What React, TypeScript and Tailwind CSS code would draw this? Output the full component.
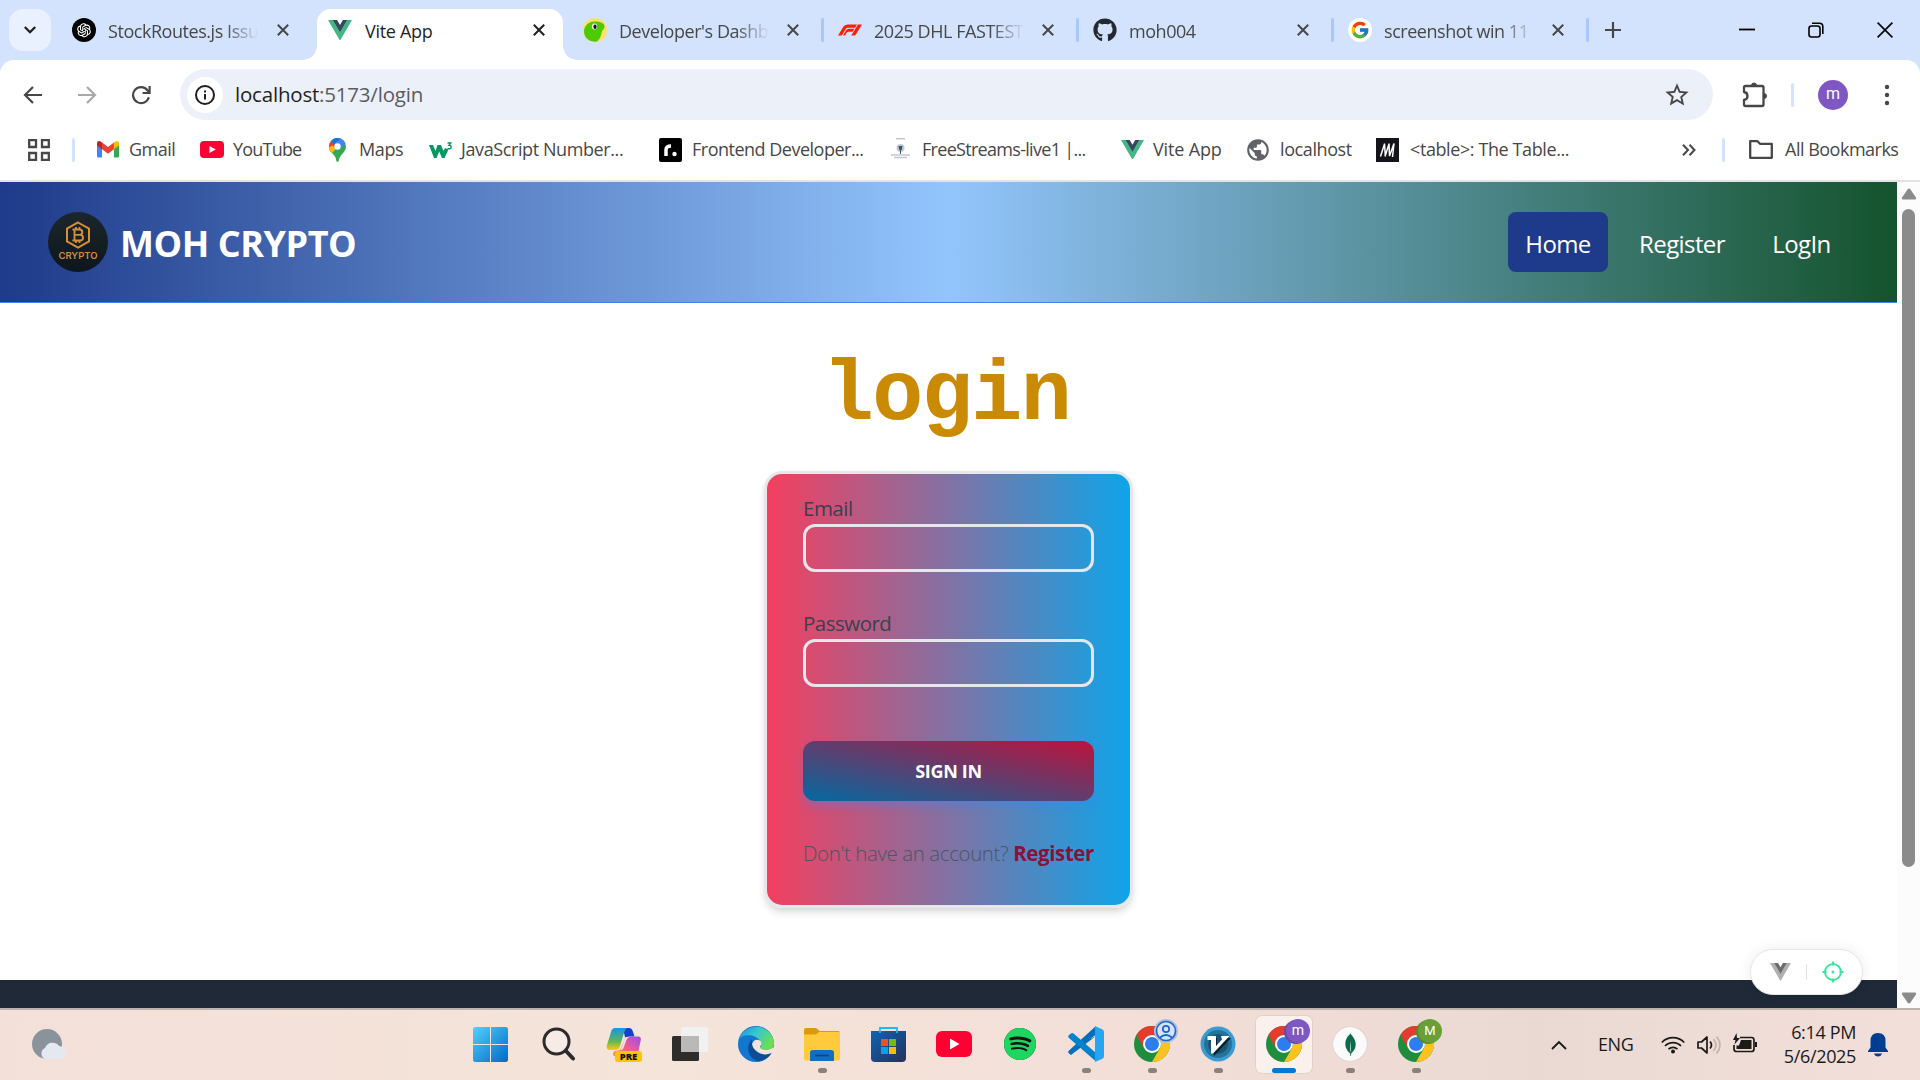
import type { ReactNode } from "react";
import { MdStarBorder, MdPublic } from "react-icons/md";
import { FaGithub, FaSpotify } from "react-icons/fa";
import { FcGoogle } from "react-icons/fc";
import { SiMongodb } from "react-icons/si";
import { AiOutlineOpenAI } from "react-icons/ai";

const ui = "font-['Open_Sans','Noto_Sans',sans-serif]";

function CloseX({ className = "text-[#474747]" }: { className?: string }) {
  return (
    <svg viewBox="0 0 12 12" className={`h-3 w-3 shrink-0 ${className}`} fill="none" stroke="currentColor" strokeWidth="2">
      <path d="M.8.8l10.4 10.4M11.2.8L.8 11.2" />
    </svg>
  );
}

function VueLogo({ outer = "#41b883", inner = "#34495e", className = "w-6" }: { outer?: string; inner?: string; className?: string }) {
  return (
    <svg viewBox="0 0 256 221" className={`shrink-0 ${className}`}>
      <path d="M0 0h51l77 132L204 0h52L128 221z" fill={outer} />
      <path d="M50 0l78 133L205 0h-47l-30 52L97 0z" fill={inner} />
    </svg>
  );
}

function GeckoIcon() {
  return (
    <svg viewBox="0 0 24 24" className="h-6 w-6">
      <circle cx="12" cy="12" r="12" fill="#ffe066" />
      <path d="M1 14C1 8 5 4 11 3.5c5-.5 10 1 10.500 4.500.4 3-2.500 4-3 7C18 19 16 22 13.500 23.800 6 24 1.500 20 1 14z" fill="#4bcb00" />
      <ellipse cx="11.500" cy="8.500" rx="2.600" ry="3" fill="#fff" />
      <ellipse cx="12" cy="8.800" rx="1.600" ry="2.200" fill="#111" />
    </svg>
  );
}

function F1Icon() {
  return (
    <svg viewBox="0 0 24 24" className="h-6 w-6" fill="#ff1e00">
      <path d="M0 17.500L5.200 9Q6.600 6.500 9.500 6.500H19l-2 3.200H10q-1.500 0-2.300 1.300L3.800 17.500z" />
      <path d="M5 17.500l3.200-5.200q.9-1.500 2.700-1.500h5.500l-1.800 3h-4.300q-1 0-1.500.8l-1.700 2.900z" />
      <path d="M20 6.500h4l-6.800 11h-4z" />
    </svg>
  );
}

const tabs: { title: string; icon: ReactNode }[] = [
  { title: "Developer's Dashb", icon: <GeckoIcon /> },
  { title: "2025 DHL FASTEST", icon: <F1Icon /> },
  { title: "moh004", icon: <FaGithub className="h-6 w-6 text-[#24292f]" /> },
  {
    title: "screenshot win 11",
    icon: (
      <span className="flex h-6 w-6 items-center justify-center rounded-full bg-white">
        <FcGoogle className="h-5 w-5" />
      </span>
    ),
  },
];

function TabTitle({ children }: { children: ReactNode }) {
  return (
    <span className="block w-[150px] whitespace-nowrap text-[18px] leading-6 tracking-[-0.45px] text-[#474747] [mask-image:linear-gradient(to_right,black_78%,transparent)]">
      {children}
    </span>
  );
}

function TabStrip() {
  return (
    <div className="flex h-[60px] bg-[#d3e3fd]">
      <div className="ml-[9px] mt-[9px] flex h-[42px] w-[42px] shrink-0 items-center justify-center rounded-[14px] bg-[#e9f1fe]">
        <svg viewBox="0 0 12 8" className="h-2 w-3" fill="none" stroke="#1f1f1f" strokeWidth="2.300">
          <path d="M.8 1L6 6.200 11.200 1" />
        </svg>
      </div>
      <div className="ml-[21px] flex w-[231px] shrink-0 items-center">
        <span className="flex h-6 w-6 items-center justify-center rounded-full bg-black text-white">
          <AiOutlineOpenAI className="h-[18px] w-[18px]" />
        </span>
        <span className="ml-3 w-[169px] pt-0.5">
          <TabTitle>StockRoutes.js Issu</TabTitle>
        </span>
        <CloseX />
      </div>
      <div className="flex shrink-0 items-end">
        <div className="h-[14px] w-[14px] bg-[radial-gradient(circle_at_0_0,#d3e3fd_13.500px,#fff_14px)]" />
        <div className="flex h-[51px] w-[246px] items-center rounded-t-[14px] bg-white pb-[9px]">
          <VueLogo className="ml-[11px] w-6" />
          <span className="ml-[13px] w-[168px] pt-0.5 text-[18px] tracking-[-0.3px] text-[#1f1f1f]">Vite App</span>
          <CloseX className="text-[#1f1f1f]" />
        </div>
        <div className="h-[14px] w-[14px] bg-[radial-gradient(circle_at_100%_0,#d3e3fd_13.500px,#fff_14px)]" />
      </div>
      <div className="-ml-[7px] flex items-center">
        {tabs.map((t) => (
          <div key={t.title} className="flex h-full w-[255px] shrink-0 items-center">
            <span className="ml-[13px] w-6 shrink-0">{t.icon}</span>
            <span className="ml-3 w-[168px] shrink-0 pt-0.5">
              <TabTitle>{t.title}</TabTitle>
            </span>
            <CloseX />
            <span className="ml-[22px] h-6 w-[3px] rounded-full bg-[#a8c7fa]" />
          </div>
        ))}
      </div>
      <svg viewBox="0 0 16 16" className="ml-[15px] mt-[22px] h-4 w-4 shrink-0" stroke="#474747" strokeWidth="2.200">
        <path d="M8 0v16M0 8h16" />
      </svg>
      <div className="ml-auto mr-[27px] flex items-center gap-[53px] text-black">
        <svg viewBox="0 0 16 16" className="h-4 w-4" stroke="currentColor" strokeWidth="1.800">
          <path d="M0 7.500h16" />
        </svg>
        <svg viewBox="0 0 16 16" className="h-4 w-4" fill="none" stroke="currentColor" strokeWidth="1.600">
          <rect x="1" y="4" width="11" height="11" rx="2.500" />
          <path d="M4 1.200h7.500q3.300 0 3.300 3.300V12" />
        </svg>
        <svg viewBox="0 0 16 16" className="h-4 w-4" fill="none" stroke="currentColor" strokeWidth="1.600">
          <path d="M.6.6l14.800 14.800M15.400.6L.6 15.400" />
        </svg>
      </div>
    </div>
  );
}

function Toolbar() {
  return (
    <div className="bg-[#d3e3fd]">
      <div className="flex h-[68px] items-center rounded-t-[14px] bg-white pt-px text-[#474747]">
        <svg viewBox="0 0 20 20" className="ml-[23px] h-5 w-5" fill="none" stroke="currentColor" strokeWidth="2.200">
          <path d="M19 10H2.500M10 2l-8 8 8 8" />
        </svg>
        <svg viewBox="0 0 20 20" className="ml-[34px] h-5 w-5 text-[#a9a9a9]" fill="none" stroke="currentColor" strokeWidth="2.200">
          <path d="M1 10h16.500M10 2l8 8-8 8" />
        </svg>
        <svg viewBox="0 0 20 20" className="ml-[34px] h-5 w-5" fill="none" stroke="currentColor" strokeWidth="2.200">
          <path d="M17.800 12.200A8 8 0 1 1 16.500 5.300L18 7.500M18.600 1v7h-7" />
        </svg>
        <div className="ml-[29px] flex h-[51px] w-[1533px] items-center rounded-full bg-[#ecf0f9]">
          <span className="ml-[7px] flex h-9 w-9 items-center justify-center rounded-full bg-white">
            <svg viewBox="0 0 20 20" className="h-5 w-5" fill="none" stroke="#1f1f1f" strokeWidth="2">
              <circle cx="10" cy="10" r="9" />
              <path d="M10 9v5.500M10 5.500v2" />
            </svg>
          </span>
          <span className="ml-[12px] text-[20.500px] tracking-[-0.2px] text-[#5a5c60]">
            <span className="text-[#1f1f1f]">localhost</span>:5173/login
          </span>
          <MdStarBorder className="ml-auto mr-[22px] h-7 w-7" />
        </div>
        <svg viewBox="0 0 26 26" className="ml-[29px] h-[26px] w-[26px]" fill="none" stroke="currentColor" strokeWidth="2.300">
          <path d="M2 5.500q0-1.500 1.500-1.500H20q1.500 0 1.500 1.500v17q0 1.500-1.500 1.500H3.500Q2 24 2 22.500V18q3.500-.5 3.500-4T2 10z" strokeLinejoin="round" />
          <path d="M9.500 3.500a2.500 2.500 0 0 1 5 0zM22 11.500a2.500 2.500 0 0 1 0 5z" fill="currentColor" strokeWidth="1" />
        </svg>
        <span className="ml-[23px] h-6 w-[3px] rounded-full bg-[#d3e3fd]" />
        <span className="ml-[24px] flex h-[30px] w-[30px] items-center justify-center rounded-full bg-[#7e57c2] pb-0.5 font-[Roboto,sans-serif] text-[16px] text-white">m</span>
        <svg viewBox="0 0 6 22" className="ml-[36px] h-[22px] w-1.5" fill="currentColor">
          <circle cx="3" cy="3" r="2.200" />
          <circle cx="3" cy="11" r="2.200" />
          <circle cx="3" cy="19" r="2.200" />
        </svg>
      </div>
    </div>
  );
}

const bookmarks: { label: string; width: string; slot?: string; icon: ReactNode; track?: string }[] = [
  {
    label: "Gmail",
    width: "w-[103px]",
    track: "tracking-[-0.5px]",
    icon: (
      <svg viewBox="0 0 24 18" className="w-[22px]">
        <path d="M0 3v13.500Q0 18 1.500 18H5.500V7z" fill="#4285f4" />
        <path d="M24 3v13.500q0 1.500-1.500 1.500h-4V7z" fill="#34a853" />
        <path d="M5.500 1.500V9L12 14l6.500-5V1.500L12 6.500z" fill="#ea4335" />
        <path d="M0 2.500Q0 0 2.200 0 3 0 5.500 1.500V9L0 5z" fill="#c5221f" />
        <path d="M24 2.500Q24 0 21.800 0 21 0 18.500 1.500V9L24 5z" fill="#fbbc04" />
      </svg>
    ),
  },
  {
    label: "YouTube",
    width: "w-[128px]",
    slot: "w-[33px]",
    track: "tracking-[-0.8px]",
    icon: (
      <svg viewBox="0 0 24 17" className="w-6">
        <rect width="24" height="17" rx="4" fill="#ff0033" />
        <path d="M9.500 5v7l6.200-3.500z" fill="#fff" />
      </svg>
    ),
  },
  {
    label: "Maps",
    width: "w-[101px]",
    slot: "w-[31px]",
    icon: (
      <svg viewBox="0 0 17 24" className="ml-px h-6">
        <path d="M8.500 0a8.500 8.500 0 0 1 8.500 8.500c0 6-6.500 8-7.300 14.200-.2 1.500-2.200 1.500-2.400 0C7 16 0 15 0 8.500A8.500 8.500 0 0 1 8.500 0z" fill="#34a853" />
        <path d="M0 8.500q0 4 2.600 6.800L11 5 2 3Q0 5.500 0 8.500z" fill="#fbbc04" />
        <path d="M2 3l6.500 5.500L2 14Q0 11 0 8.500 0 5 2 3z" fill="#ea4335" />
        <path d="M2 3A8.500 8.500 0 0 1 11.500.5L5 7z" fill="#1a73e8" />
        <path d="M11.500.5A8.500 8.500 0 0 1 16.500 6L9 12 6 6z" fill="#4285f4" />
        <path d="M0 9.500Q.5 12.500 2.600 15.300L7 11 3.500 7.500z" fill="#fbbc04" />
        <circle cx="8.500" cy="8.500" r="3.200" fill="#fff" />
      </svg>
    ),
  },
  {
    label: "JavaScript Number...",
    width: "w-[230px]",
    icon: (
      <svg viewBox="0 0 24 20" className="w-6">
        <path d="M0 5h4l2.500 6L8.500 5h3.500l2.500 6L16 8l3.500 1.500L15.500 18h-2.500L10.200 11.500 7.500 18H5z" fill="#059862" />
        <path d="M18.500 3h3.300l-1.800 2.300q2.200 0 2.200 2T18.500 8.500" fill="none" stroke="#059862" strokeWidth="1.400" />
      </svg>
    ),
  },
  {
    label: "Frontend Developer...",
    width: "w-[230px]",
    slot: "w-[33px]",
    track: "tracking-[-0.500px]",
    icon: (
      <svg viewBox="0 0 23 24" className="h-6">
        <rect width="23" height="24" rx="2" fill="#000" />
        <path d="M7 18v-6q0-4 5-4" fill="none" stroke="#fff" strokeWidth="3.500" />
        <circle cx="15.500" cy="16" r="2.200" fill="#fff" />
      </svg>
    ),
  },
  {
    label: "FreeStreams-live1 |...",
    width: "w-[232px]",
    slot: "w-[33px]",
    track: "tracking-[-0.700px]",
    icon: (
      <svg viewBox="0 0 23 24" className="h-6">
        <path d="M7 .8h9M2 17h19M5 19.500h13" stroke="#c3c7ce" strokeWidth="1.500" />
        <circle cx="11.500" cy="10" r="4" fill="#c3c9d3" />
        <path d="M9.500 8h4l-.8 4h-2.400zM11 12h1v4h-1z" fill="#43506a" />
      </svg>
    ),
  },
  { label: "Vite App", width: "w-[126px]", track: "tracking-[-0.150px]", icon: <VueLogo className="w-[23px]" /> },
  { label: "localhost", width: "w-[129px]", slot: "w-[33px]", icon: <MdPublic className="-ml-0.5 h-[26px] w-[26px] text-[#5f6368]" /> },
  {
    label: "<table>: The Table...",
    width: "w-[230px]",
    slot: "w-[34px]",
    icon: (
      <svg viewBox="0 0 23 24" className="h-6">
        <rect width="23" height="24" fill="#15141a" />
        <path d="M4.500 18.500L8.500 6M9 18.500L13 6M8.500 5.500l.8 12M13 5.500l.5 12.500L18 5.500 16.500 19" fill="none" stroke="#fff" strokeWidth="1.500" />
      </svg>
    ),
  },
];

function BookmarksBar() {
  return (
    <div className="flex h-[54px] items-center border-b-2 border-[#e1e3e6] bg-white pb-[9px] text-[18px] tracking-[-0.4px] text-[#474747]">
      <svg viewBox="0 0 22 22" className="ml-7 h-[22px] w-[22px]" fill="none" stroke="currentColor" strokeWidth="2.300">
        <path d="M1.200 1.200H8V8H1.200zM14 1.200h6.800V8H14zM1.200 14H8v6.800H1.200zM14 14h6.800v6.800H14z" />
      </svg>
      <span className="ml-[22px] mr-[22px] h-6 w-[3px] rounded-full bg-[#d3e3fd]" />
      {bookmarks.map((b) => (
        <div key={b.label + b.width} className={`flex shrink-0 items-center whitespace-nowrap ${b.width}`}>
          <span className={`flex shrink-0 items-center ${b.slot ?? "w-8"}`}>{b.icon}</span>
          <span className={b.track}>{b.label}</span>
        </div>
      ))}
      <svg viewBox="0 0 14 12" className="ml-[76px] h-3 w-3.5" fill="none" stroke="currentColor" strokeWidth="2">
        <path d="M1 .8L6 6l-5 5.200M7.500.8l5 5.200-5 5.200" />
      </svg>
      <span className="ml-[26px] h-6 w-[3px] rounded-full bg-[#d3e3fd]" />
      <svg viewBox="0 0 24 19" className="ml-[24px] h-[19px] w-6" fill="none" stroke="currentColor" strokeWidth="2.300" strokeLinejoin="round">
        <path d="M1.200 1.200h7.300l2.500 2.600h11.800v14H1.200z" />
      </svg>
      <span className="ml-3 whitespace-nowrap tracking-[-0.5px]">All Bookmarks</span>
    </div>
  );
}

function CryptoLogo() {
  return (
    <div className="flex h-[60px] w-[60px] flex-col items-center rounded-full bg-[linear-gradient(to_bottom,#1b262d,#0d161d)] pt-[9px] text-[#d38f3a]">
      <svg viewBox="0 0 26 28" className="h-7 w-[26px]" fill="none" stroke="currentColor">
        <path d="M13 1.500l11 6.200v12.600l-11 6.200-11-6.200V7.700z" strokeWidth="2" />
        <path d="M9.500 8.500v11M7.500 8.500h7q2.800 0 2.800 2.700t-2.800 2.700h-5 5.500q3 0 3 2.800t-3 2.800H7.500M11 6v2.500M14.500 6v2.500M11 19.500V22M14.500 19.500V22" strokeWidth="1.900" />
      </svg>
      <span className="mt-px font-[Inter,sans-serif] text-[9.500px] font-semibold leading-[11px]">CRYPTO</span>
    </div>
  );
}

function SiteHeader() {
  return (
    <header className="flex h-[121px] items-center border-b border-[#3b82f6] bg-[linear-gradient(to_right,#1e3a8a,#93c5fd,#14532d)] pl-12 pr-[49px] text-white">
      <CryptoLogo />
      <h1 className="ml-3 pt-[3px] text-[36px] font-bold leading-10 tracking-[-0.450px]">MOH CRYPTO</h1>
      <nav className="ml-auto flex text-[24px] tracking-[-0.6px]">
        <a className="flex h-[60px] w-[100px] items-center justify-center rounded-lg bg-[#1e3a8a] pt-[3px]">Home</a>
        <a className="ml-3 flex h-[60px] w-[124px] items-center justify-center pt-[3px]">Register</a>
        <a className="ml-3 flex h-[60px] w-[92px] items-center justify-center pr-px pt-[3px]">LogIn</a>
      </nav>
    </header>
  );
}

function Field({ label }: { label: string }) {
  return (
    <label className="flex flex-col">
      <span className="mb-px text-[20.500px] leading-[29px] tracking-[-0.500px] text-[#374151]">{label}</span>
      <input className="h-12 w-full rounded-xl border-[3px] border-[#e5e7eb] bg-transparent" />
    </label>
  );
}

function LoginPage() {
  return (
    <main className="flex grow flex-col items-center bg-white">
      <h2 className="mr-[4px] mt-[45px] h-[123px] font-['Liberation_Mono',monospace] text-[85px] font-bold leading-[98px] tracking-[-1.500px] text-[#ca8a04]">login</h2>
      <form className="flex h-[437px] w-[369px] flex-col rounded-[18px] border-[3px] border-[#e5e7eb] bg-[linear-gradient(to_right,#f43f5e,#0ea5e9)] px-9 pt-5 shadow-[0_6px_9px_-1px_rgba(0,0,0,0.1),0_3px_6px_-2px_rgba(0,0,0,0.1)]">
        <Field label="Email" />
        <div className="mt-[37px]">
          <Field label="Password" />
        </div>
        <button
          type="button"
          className="mt-[54px] h-[60px] rounded-xl bg-[linear-gradient(to_top_right,#0369a1,#be123c)] text-[18px] font-bold tracking-[-0.3px] text-white shadow-[0_6px_9px_-1px_rgba(59,130,246,0.4)]"
        >
          SIGN IN
        </button>
        <p className="mt-[37px] flex justify-between whitespace-nowrap text-[20.500px] font-light leading-[30px] tracking-[-0.4px] text-[#4b5563]">
          Don't have an account? <b className="font-bold text-[#881337]">Register</b>
        </p>
      </form>
    </main>
  );
}

function Scrollbar() {
  return (
    <div className="flex w-[23px] flex-col items-center bg-[#fcfcfc]">
      <svg viewBox="0 0 16 12" className="mt-1.5 h-3 w-4" fill="#8b8b8b">
        <path d="M8 .5q.8 0 1.300.8L15 9.500q.8 2-1 2H2q-1.800 0-1-2l5.700-8.200Q7.200.5 8 .5z" />
      </svg>
      <div className="mt-[9px] h-[658px] w-[13px] rounded-full bg-[#8b8b8b]" />
      <svg viewBox="0 0 16 12" className="mb-1 mt-auto h-3 w-4" fill="#8b8b8b">
        <path d="M8 11.500q.8 0 1.300-.8L15 2.500q.8-2-1-2H2q-1.800 0-1 2l5.700 8.200q.5.800 1.300.8z" />
      </svg>
    </div>
  );
}

function DevtoolsPill() {
  return (
    <div className="absolute bottom-[13px] left-[1750px] flex h-[46px] w-[113px] items-center rounded-full border border-[#e6e6e6] bg-white shadow-[0_0_14px_rgba(0,0,0,0.08)]">
      <VueLogo outer="#b0b0b0" inner="#6b6b6b" className="ml-[19px] w-[21px]" />
      <span className="ml-[15px] h-4 w-px bg-[#e3e3e3]" />
      <svg viewBox="0 0 22 22" className="ml-[15px] h-[22px] w-[22px]" fill="none" stroke="#3ee3a0" strokeWidth="2">
        <circle cx="11" cy="11" r="8" />
        <path d="M11 .5V4.500M11 17.500v4M.5 11H4.500M17.500 11h4" />
        <circle cx="11" cy="11" r="1.500" fill="#3ee3a0" stroke="none" />
      </svg>
    </div>
  );
}

function Chrome() {
  return (
    <svg viewBox="0 0 36 36" className="h-9 w-9">
      <circle cx="18" cy="18" r="18" fill="#1e8e3e" />
      <path d="M18 9h15.600A18 18 0 0 1 18 36l7.800-13.500A9 9 0 0 0 18 9z" fill="#fcc31e" />
      <path d="M18 9h15.600A18 18 0 0 0 2.400 9l7.800 13.500A9 9 0 0 1 18 9z" fill="#e33b2e" />
      <circle cx="18" cy="18" r="9" fill="#fff" />
      <circle cx="18" cy="18" r="7" fill="#2c7df0" />
    </svg>
  );
}

function ChromeWithBadge({ badge }: { badge: ReactNode }) {
  return (
    <div className="relative">
      <Chrome />
      <span className="absolute -right-2 -top-[7px]">{badge}</span>
    </div>
  );
}

const taskIcons: { id: string; icon: ReactNode; running?: boolean; active?: boolean }[] = [
  {
    id: "start",
    icon: (
      <svg viewBox="0 0 35 35" className="mr-[3px] h-[35px] w-[35px]">
        <defs>
          <linearGradient id="win" x1="0" y1="0" x2="1" y2="1">
            <stop offset="0" stopColor="#52d0fb" />
            <stop offset="1" stopColor="#0169c9" />
          </linearGradient>
        </defs>
        <path d="M1.500 0H17v17H0V1.500zM18 0h15.500L35 1.500V17H18zM0 18h17v17H1.500L0 33.500zM18 18h17v15.500L33.500 35H18z" fill="url(#win)" />
      </svg>
    ),
  },
  {
    id: "search",
    icon: (
      <svg viewBox="0 0 34 34" className="ml-px h-[34px] w-[34px]" fill="none" stroke="#2b2b2b" strokeLinecap="round">
        <circle cx="14.500" cy="14.500" r="12.500" strokeWidth="3" fill="#f7ebe5" />
        <path d="M24 24l7 7.500" strokeWidth="4" />
      </svg>
    ),
  },
  {
    id: "copilot",
    icon: (
      <svg viewBox="0 0 36 36" className="h-9 w-9">
        <defs>
          <linearGradient id="cpa" x1="0" y1="0" x2="0" y2="1">
            <stop offset="0" stopColor="#1695ea" />
            <stop offset=".6" stopColor="#5fb557" />
            <stop offset="1" stopColor="#ffca0b" />
          </linearGradient>
          <linearGradient id="cpb" x1="1" y1="0" x2="0" y2="1">
            <stop offset="0" stopColor="#9a4df0" />
            <stop offset=".5" stopColor="#ec5a98" />
            <stop offset="1" stopColor="#ff8a4c" />
          </linearGradient>
        </defs>
        <path d="M17 2h6q3 0 4 4l1.500 4.500h-5q-3 0-4 3z" fill="#0a45cc" />
        <path d="M9 2h12q-2 1-3 5l-4 13q-1 4-5 4H4q-4.500 0-3-5L5 6q1-4 4-4z" fill="url(#cpa)" />
        <path d="M23 10.500h9q4 0 2.500 5l-2 9.500q-2 5-6 5H7.500q-1-4 1.500-5 5 .5 7-5l3-7q1-2.500 4-2.500z" fill="url(#cpb)" />
        <path d="M19.500 11h3.500q-2 1-3 4l-2.500 7q-1 2.500-4 2.500 1.800-1.500 2.500-4z" fill="#f5e4da" />
        <rect x="9" y="25" width="27" height="11" rx="3" fill="#fdc500" />
        <text x="22.500" y="34" textAnchor="middle" fontFamily="Open Sans" fontWeight="800" fontSize="9.500" fill="#111">
          PRE
        </text>
      </svg>
    ),
  },
  {
    id: "taskview",
    icon: (
      <svg viewBox="0 0 36 36" className="h-9 w-9">
        <rect x="0" y="10" width="27" height="25" rx="1.500" fill="#2e2d2c" />
        <rect x="9" y="1" width="27" height="25" rx="1.500" fill="#f1f1f1" />
        <path d="M9 10h18v16H9z" fill="#b9b9b8" />
      </svg>
    ),
  },
  {
    id: "edge",
    icon: (
      <svg viewBox="0 0 36 36" className="h-9 w-9">
        <defs>
          <linearGradient id="ed" x1="0" y1="0" x2="1" y2=".5">
            <stop offset="0" stopColor="#1b8fd8" />
            <stop offset=".5" stopColor="#37c6d6" />
            <stop offset="1" stopColor="#6be04f" />
          </linearGradient>
        </defs>
        <circle cx="18" cy="18" r="18" fill="#1177cf" />
        <path d="M1 13A18 18 0 0 1 36 17q0 7-8 7-6 0-6-2.500 2-2 1-5-2-5-9-7Q5 8 1 13z" fill="url(#ed)" />
        <path d="M14 13q-5 6-3.500 13 2 7 10 9.300Q29 34 33.500 27q-7 3-13 0-6.500-4-6.500-14z" fill="#0d4c96" />
        <path d="M14 18q2.500-6 8-3.500 3 3 0 6 0 3.500 7 3.500 4-.5 6.500-3l1.500 6h-3.500q-7 3-13-.5-5.500-3-6.500-8.500z" fill="#f5e2d9" />
      </svg>
    ),
  },
  {
    id: "explorer",
    running: true,
    icon: (
      <svg viewBox="0 0 36 33" className="h-[33px] w-9">
        <path d="M0 2q0-2 2-2h9q1.500 0 2.500 1l2 2H34q2 0 2 2v5H0z" fill="#dd9a0a" />
        <path d="M0 6.500h12L15 4h21v26.500q0 2-2 2H2q-2 0-2-2z" fill="#ffcb3d" />
        <path d="M6 33V25q0-3 3-3h18q3 0 3 3v8z" fill="#0c70c4" />
        <path d="M11 27.500h14" stroke="#094a86" strokeWidth="1.800" />
      </svg>
    ),
  },
  {
    id: "store",
    icon: (
      <svg viewBox="0 0 35 36" className="h-9 w-[35px]">
        <defs>
          <linearGradient id="st" x1="0" y1="0" x2="1" y2="1">
            <stop offset="0" stopColor="#0c64b4" />
            <stop offset="1" stopColor="#283059" />
          </linearGradient>
        </defs>
        <path d="M0 5h35v27q0 4-4 4H4q-4 0-4-4z" fill="url(#st)" />
        <path d="M9 7V2h17v5" fill="none" stroke="#22b7f0" strokeWidth="1.800" />
        <path d="M10 13h7v7h-7z" fill="#f25022" />
        <path d="M18 13h7v7h-7z" fill="#7fba00" />
        <path d="M10 21h7v7h-7z" fill="#00a4ef" />
        <path d="M18 21h7v7h-7z" fill="#ffb900" />
      </svg>
    ),
  },
  {
    id: "youtube",
    icon: (
      <svg viewBox="0 0 36 26" className="w-9">
        <rect width="36" height="26" rx="6" fill="#ff0033" />
        <path d="M14 7.500v11l9.500-5.500z" fill="#fff" />
      </svg>
    ),
  },
  {
    id: "spotify",
    icon: (
      <span className="flex rounded-full bg-[#191414] shadow-[inset_0_0_0_2px_#1ed760]">
        <FaSpotify className="h-8 w-8 text-[#1ed760]" />
      </span>
    ),
  },
  {
    id: "vscode",
    running: true,
    icon: (
      <svg viewBox="0 0 36 36" className="h-9 w-9">
        <path d="M1 24.500l3 2.500L28 8.500V0L1 24.500q-1.500 1.500 0 3l2 1.500 25-19z" fill="#0070b8" />
        <path d="M1 12q-1.500-1.500 0-3l2-1.600q1-.8 2.500 0L28 27v8.500z" fill="#0082cc" />
        <path d="M27 0l7.500 3.500Q36 4 36 6v24q0 2-1.500 2.700L27 36z" fill="#26a6f2" />
      </svg>
    ),
  },
  {
    id: "chrome-guest",
    running: true,
    icon: (
      <ChromeWithBadge
        badge={
          <svg viewBox="0 0 24 24" className="h-6 w-6">
            <circle cx="12" cy="12" r="12" fill="#a9bfdd" />
            <circle cx="12" cy="12" r="9.500" fill="#d5e4fb" stroke="#1e63cf" strokeWidth="1.600" />
            <circle cx="12" cy="10" r="3.200" fill="none" stroke="#1e63cf" strokeWidth="1.700" />
            <path d="M6 18.500q6-5 12 0" fill="none" stroke="#1e63cf" strokeWidth="2" />
          </svg>
        }
      />
    ),
  },
  {
    id: "vim",
    running: true,
    icon: (
      <svg viewBox="0 0 36 36" className="h-9 w-9">
        <circle cx="18" cy="18" r="17.500" fill="#3a9bd0" />
        <circle cx="18" cy="18" r="14" fill="#23749c" />
        <circle cx="18" cy="18" r="10" fill="#195473" />
        <path d="M10 12h7v9l7-9h7L14 30z" fill="#0b2230" />
        <path d="M7.500 10H16v10l6-6.500-1-3.500h8.500L13 27.500h-2V14H7.500z" fill="#fff" />
      </svg>
    ),
  },
  {
    id: "chrome-m",
    running: true,
    active: true,
    icon: (
      <ChromeWithBadge
        badge={<span className="flex h-6 w-6 items-center justify-center rounded-full bg-[#7e57c2] pb-0.5 font-[Roboto,sans-serif] text-[14px] text-white shadow-[-2px_1px_0_#6b46ab]">m</span>}
      />
    ),
  },
  {
    id: "mongodb",
    running: true,
    icon: (
      <span className="flex h-[34px] w-[34px] items-center justify-center rounded-full bg-[#fafafa] shadow-[0_0_1px_#0004]">
        <SiMongodb className="h-[23px] w-[23px] text-[#0b6b4a]" />
      </span>
    ),
  },
  {
    id: "chrome-M",
    running: true,
    icon: (
      <ChromeWithBadge
        badge={<span className="flex h-6 w-6 items-center justify-center rounded-full bg-[#689f38] font-[Roboto,sans-serif] text-[13px] text-white shadow-[-2px_1px_0_#56882c]">M</span>}
      />
    ),
  },
];

function Taskbar() {
  return (
    <footer className="flex h-[72px] items-start border-t-2 border-[#bcb2ae] bg-[linear-gradient(to_right,#f3e1d9,#f5e4da_35%,#f2ded7_62%,#ead9d3_80%,#f3dfd9)] text-[#1b1a19]">
      <div className="ml-8 flex h-[70px] w-[427px] items-center">
        <svg viewBox="0 0 34 32" className="h-8 w-[34px]">
          <circle cx="15" cy="15" r="15" fill="#8a929c" />
          <path d="M13 30a6 6 0 0 1 0-11 8 8 0 0 1 14-2 7 7 0 0 1 3 13z" fill="#e4e9f0" />
        </svg>
      </div>
      {taskIcons.map((t) => (
        <div key={t.id} className="flex h-[70px] w-[66px] shrink-0 flex-col items-center pt-[6px]">
          <div className={t.active ? "flex h-[57px] w-14 flex-col items-center rounded-md bg-[#faf1ed] shadow-[0_0_0_1px_#e2d1ca]" : "flex h-[57px] w-14 flex-col items-center"}>
            <div className="flex h-[52px] items-center pt-1">{t.icon}</div>
            {t.running && <span className={t.active ? "h-[5px] w-6 shrink-0 rounded-full bg-[#0078d4]" : "h-[5px] w-[9px] shrink-0 rounded-full bg-[#8a817d]"} />}
          </div>
        </div>
      ))}
      <div className="flex h-[70px] grow items-center text-[18px] tracking-[-0.4px]">
        <svg viewBox="0 0 16 10" className="ml-[102px] h-2.5 w-4" fill="none" stroke="currentColor" strokeWidth="1.900">
          <path d="M1 9l7-7 7 7" />
        </svg>
        <span className="ml-[31px] w-[63px] pb-0.5">ENG</span>
        <svg viewBox="0 0 24 18" className="h-[18px] w-6" fill="none" stroke="currentColor" strokeWidth="1.700">
          <path d="M.8 6.500a15.500 15.500 0 0 1 22.400 0M4 10a11 11 0 0 1 16 0M7.500 13.200a6.500 6.500 0 0 1 9 0" />
          <circle cx="12" cy="15.500" r="2" fill="currentColor" stroke="none" />
        </svg>
        <svg viewBox="0 0 24 20" className="ml-3 h-5 w-6" fill="none" stroke="currentColor" strokeWidth="1.700">
          <path d="M1 7h3.500L10 2v16l-5.500-5H1z" strokeLinejoin="round" />
          <path d="M13 6.500q3 3.500 0 7" />
          <path d="M16.500 4q5 6 0 12M19.500 1.500q7 8.500 0 17" stroke="#c2b3ae" />
        </svg>
        <svg viewBox="0 0 24 20" className="mb-1 ml-3 h-5 w-6">
          <path d="M7 4.500h11.500q2.500 0 2.500 2.500v9q0 2.500-2.500 2.500h-15Q1 18.500 1 16v-4" fill="none" stroke="currentColor" strokeWidth="1.700" />
          <path d="M8 7h10.500v9H3.500v-3.500H6zM22 9h2v5h-2zM3.500 0L0 7h2.500L1.500 11.500 7 5H4z" fill="currentColor" />
        </svg>
        <div className="ml-auto flex flex-col items-end pb-[3px] leading-6 tracking-[-0.350px]">
          <span>6:14 PM</span>
          <span>5/6/2025</span>
        </div>
        <svg viewBox="0 0 20 24" className="ml-3 mr-8 h-6 w-5 shrink-0" fill="#003e92">
          <path d="M10 0q7.500 0 7.500 8v6.500L20 18v1H0v-1l2.500-3.500V8Q2.500 0 10 0zM6 20.500h8Q13 23.500 10 23.500T6 20.500z" />
        </svg>
      </div>
    </footer>
  );
}

export default function App() {
  return (
    <div className={`flex h-[1080px] w-[1920px] flex-col overflow-hidden bg-white ${ui}`}>
      <TabStrip />
      <Toolbar />
      <BookmarksBar />
      <div className="relative flex min-h-0 grow">
        <div className="flex w-[1897px] flex-col">
          <SiteHeader />
          <LoginPage />
          <div className="h-7 shrink-0 bg-[#1f2937]" />
        </div>
        <Scrollbar />
        <DevtoolsPill />
      </div>
      <Taskbar />
    </div>
  );
}
